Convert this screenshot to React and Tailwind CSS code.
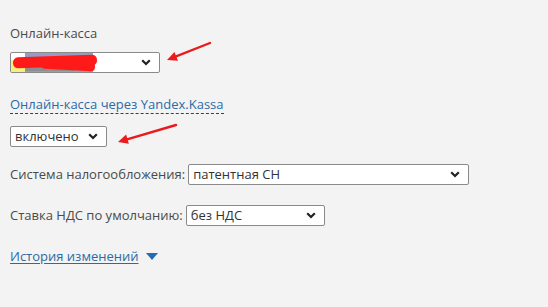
import React from "react";

function Chevron() {
  return (
    <svg width="10" height="7" viewBox="0 0 10 7" className="shrink-0">
      <path d="M1.2 1.2 L5 5 L8.8 1.2" fill="none" stroke="#222" strokeWidth="2.2" />
    </svg>
  );
}

function FakeSelect({ width, children }) {
  return (
    <div
      className={`flex items-center justify-between h-[21px] ${width} bg-white border border-[#8a8a8a] rounded-[2px] pl-[4px] pr-[8px] text-[13px] text-[#333]`}
    >
      <span className="whitespace-nowrap leading-[19px]">{children}</span>
      <Chevron />
    </div>
  );
}

function RedArrow({ x1, y1, x2, y2 }) {
  const ang = Math.atan2(y2 - y1, x2 - x1);
  const len = 11;
  const spread = 0.45;
  const ax = x2 - len * Math.cos(ang - spread);
  const ay = y2 - len * Math.sin(ang - spread);
  const bx = x2 - len * Math.cos(ang + spread);
  const by = y2 - len * Math.sin(ang + spread);
  return (
    <svg className="absolute left-0 top-0" width="548" height="307">
      <line x1={x1} y1={y1} x2={x2 - 5 * Math.cos(ang)} y2={y2 - 5 * Math.sin(ang)} stroke="#e81c1c" strokeWidth="2.4" strokeLinecap="round" />
      <polygon points={`${x2},${y2} ${ax},${ay} ${bx},${by}`} fill="#e81c1c" />
    </svg>
  );
}

export default function App() {
  return (
    <div
      className="relative w-[548px] h-[307px] overflow-hidden bg-[#f3f3f3] text-[#444] text-[13px]"
      style={{ fontFamily: '"Open Sans", Lato, sans-serif' }}
    >
      <div className="flex flex-col items-start pl-[10px] pt-[25px]">
        <div className="leading-[16px] text-[#4a4a4a]">Онлайн-касса</div>

        {/* redacted select */}
        <div className="mt-[11px] relative flex items-center h-[21px] w-[150px] bg-white border border-[#8a8a8a] rounded-[2px] pr-[8px] justify-end">
          <div className="absolute left-0 top-[7px] w-[20px] h-[12px] bg-[#f4f07a]" />
          <div className="absolute left-[14px] top-0 w-[68px] h-[19px] bg-[#9a9bc4]" />
          <div className="absolute left-[14px] top-[12px] w-[50px] h-[6px] bg-[#8e8e8e]" />
          <div className="absolute left-[2px] top-[3px] w-[84px] h-[11px] bg-[#ff1a1a] rounded-[5px] -rotate-2" />
          <div className="absolute left-[30px] top-[8px] w-[54px] h-[9px] bg-[#ff1a1a] rounded-[4px] rotate-3" />
          <Chevron />
        </div>

        <a className="mt-[23px] leading-[16px] text-[#2d6aa6] border-b border-dashed border-[#1f3f9e] pb-[1px]">
          Онлайн-касса через Yandex.Kassa
        </a>

        <div className="mt-[12px]">
          <FakeSelect width="w-[97px]">включено</FakeSelect>
        </div>

        <div className="mt-[17px] flex items-center gap-[3px]">
          <span className="text-[#4a4a4a]">Система налогообложения:</span>
          <FakeSelect width="w-[281px]">патентная СН</FakeSelect>
        </div>

        <div className="mt-[20px] flex items-center gap-[3px]">
          <span className="text-[#4a4a4a]">Ставка НДС по умолчанию:</span>
          <FakeSelect width="w-[139px]">без НДС</FakeSelect>
        </div>

        <div className="mt-[22px] flex items-center gap-[7px]">
          <a className="leading-[16px] text-[#2d6aa6] underline underline-offset-2">История изменений</a>
          <svg width="12" height="7" viewBox="0 0 12 7">
            <polygon points="0,0 12,0 6,7" fill="#1f6db3" />
          </svg>
        </div>
      </div>

      <RedArrow x1={210} y1={43} x2={167} y2={60} />
      <RedArrow x1={176} y1={125} x2={118} y2={142} />
    </div>
  );
}
